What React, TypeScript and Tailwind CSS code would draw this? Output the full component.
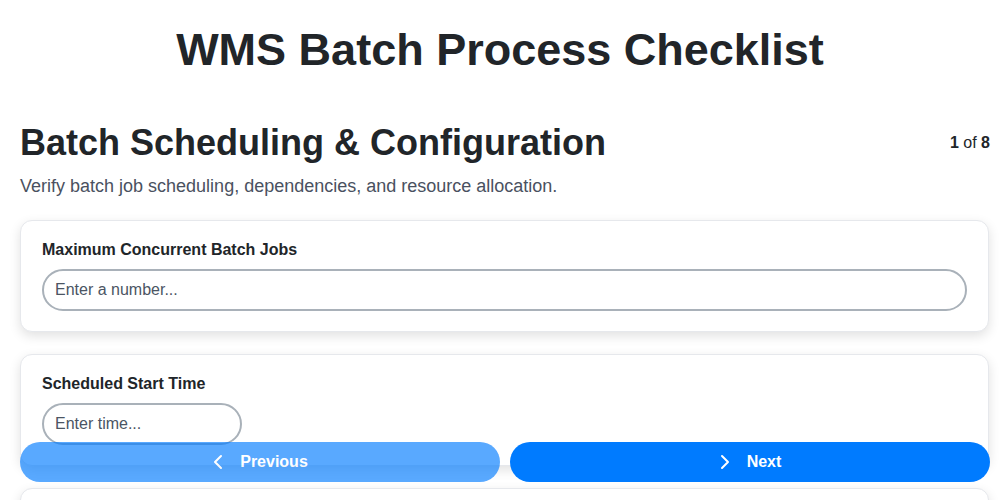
import React from "react";

const font = { fontFamily: '"Liberation Sans", Arial, sans-serif' };

function ChevLeft() {
  return (
    <svg width="12" height="16" viewBox="0 0 12 16" fill="none" stroke="white" strokeWidth="2" strokeLinecap="round" strokeLinejoin="round">
      <polyline points="9,2 3,8 9,14" />
    </svg>
  );
}

function ChevRight() {
  return (
    <svg width="12" height="16" viewBox="0 0 12 16" fill="none" stroke="white" strokeWidth="2" strokeLinecap="round" strokeLinejoin="round">
      <polyline points="3,2 9,8 3,14" />
    </svg>
  );
}

function Card({ label, placeholder, narrow }: { label: string; placeholder: string; narrow?: boolean }) {
  return (
    <div className="rounded-xl border border-[#e6e8ec] bg-white px-[21px] py-5 shadow-[0_4px_12px_rgba(0,0,0,0.12)]">
      <label className="mb-[10px] block text-base font-bold leading-[18px] text-[#212529]">{label}</label>
      <input
        type="text"
        placeholder={placeholder}
        className={`${narrow ? "w-[200px]" : "w-full"} rounded-full border-2 border-[#a9b1b9] bg-white py-[10px] pl-[11px] pr-3 text-base leading-[18px] text-[#212529] outline-none placeholder:text-[#4b5563]`}
      />
    </div>
  );
}

export default function App() {
  return (
    <div className="h-screen overflow-y-auto bg-white [scrollbar-width:none]" style={font}>
      <h1 className="pt-6 text-center text-[45px] font-bold leading-[52px] text-[#212529]">WMS Batch Process Checklist</h1>
      <div className="pb-24 pl-5 pr-[10px] text-[#212529]">
        <div className="mt-[46px] flex items-center justify-between">
          <h2 className="text-[36px] font-bold leading-[41px] text-[#212529]">Batch Scheduling &amp; Configuration</h2>
          <div className="text-base text-[#212529]">
            <span className="font-bold">1</span> of <span className="font-bold">8</span>
          </div>
        </div>
        <p className="mt-[13px] text-lg leading-[21px] text-[#4a5160]">Verify batch job scheduling, dependencies, and resource allocation.</p>
        <div className="mt-[23px] flex flex-col gap-[22px] pr-px">
          <Card label="Maximum Concurrent Batch Jobs" placeholder="Enter a number..." />
          <Card label="Scheduled Start Time" placeholder="Enter time..." narrow />
          <Card label="Batch Job Dependencies" placeholder="Enter dependencies..." />
        </div>
      </div>
      <div className="fixed bottom-[18px] left-5 right-[10px] flex gap-[10px]">
        <button className="flex h-10 flex-1 items-center justify-center gap-4 rounded-full bg-[#007bff] text-base font-bold text-white opacity-65">
          <ChevLeft />
          <span>Previous</span>
        </button>
        <button className="flex h-10 flex-1 items-center justify-center gap-4 rounded-full bg-[#007bff] text-base font-bold text-white">
          <ChevRight />
          <span>Next</span>
        </button>
      </div>
    </div>
  );
}
